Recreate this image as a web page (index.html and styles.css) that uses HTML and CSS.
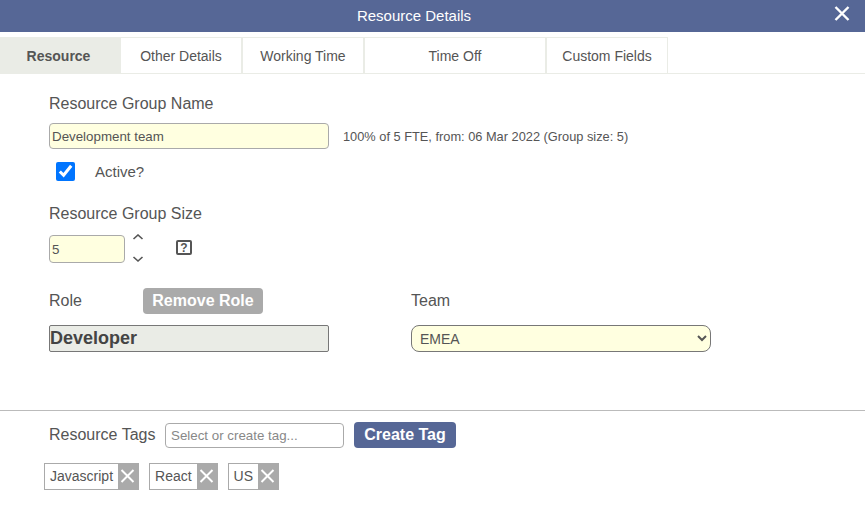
FILE: index.html
```html
<!DOCTYPE html>
<html lang="en">
<head>
<meta charset="utf-8">
<title>Resource Details</title>
<link rel="stylesheet" href="styles.css">
</head>
<body>
<header class="titlebar">
  <span class="title">Resource Details</span>
  <svg class="close" width="16" height="16" viewBox="0 0 16 16"><path d="M1.500 2 L14.500 15 M14.500 2 L1.500 15" stroke="#fff" stroke-width="2.400" fill="none"/></svg>
</header>
<nav class="tabs">
  <div class="tab tab-active tab-w1">Resource</div>
  <div class="tab tab-w2">Other Details</div>
  <div class="tab tab-w3">Working Time</div>
  <div class="tab tab-w4">Time Off</div>
  <div class="tab tab-w5">Custom Fields</div>
</nav>
<main class="form">
  <div class="label label-first">Resource Group Name</div>
  <div class="row name-row">
    <input class="field name-input" type="text" value="Development team">
    <span class="fte">100% of 5 FTE, from: 06 Mar 2022 (Group size: 5)</span>
  </div>
  <label class="active-row">
    <input class="check" type="checkbox" checked>
    <span class="active-text">Active?</span>
  </label>
  <div class="label label-size">Resource Group Size</div>
  <div class="row size-row">
    <input class="field size-input" type="text" value="5">
    <div class="stepper">
      <svg width="12" height="8" viewBox="0 0 12 8"><path d="M1.500 5 L6 1 L10.500 5" stroke="#555" stroke-width="1.600" fill="none"/></svg>
      <svg width="12" height="8" viewBox="0 0 12 8"><path d="M1.500 1 L6 5 L10.500 1" stroke="#555" stroke-width="1.600" fill="none"/></svg>
    </div>
    <span class="help">?</span>
  </div>
  <div class="role-grid">
    <div class="role-col">
      <div class="role-head">
        <span class="label role-label">Role</span>
        <button class="btn btn-grey" type="button">Remove Role</button>
      </div>
      <div class="role-value">Developer</div>
    </div>
    <div class="team-col">
      <div class="label team-label">Team</div>
      <select class="team-select"><option>EMEA</option></select>
    </div>
  </div>
</main>
<section class="tags-section">
  <div class="row tags-row">
    <span class="label tags-label">Resource Tags</span>
    <input class="tag-input" type="text" placeholder="Select or create tag...">
    <button class="btn btn-blue" type="button">Create Tag</button>
  </div>
  <div class="tag-list">
    <div class="tag"><span class="tag-text">Javascript</span><span class="tag-x"><svg width="20" height="25" viewBox="0 0 20 25"><path d="M3.500 6 L15.500 18 M15.500 6 L3.500 18" stroke="#fff" stroke-width="2" fill="none"/></svg></span></div>
    <div class="tag"><span class="tag-text">React</span><span class="tag-x"><svg width="20" height="25" viewBox="0 0 20 25"><path d="M3.500 6 L15.500 18 M15.500 6 L3.500 18" stroke="#fff" stroke-width="2" fill="none"/></svg></span></div>
    <div class="tag"><span class="tag-text">US</span><span class="tag-x"><svg width="20" height="25" viewBox="0 0 20 25"><path d="M3.500 6 L15.500 18 M15.500 6 L3.500 18" stroke="#fff" stroke-width="2" fill="none"/></svg></span></div>
  </div>
</section>
</body>
</html>
```
FILE: styles.css
```css
* { box-sizing: border-box; }
html, body { margin: 0; padding: 0; }
body {
  width: 865px;
  height: 511px;
  overflow: hidden;
  background: #fff;
  font-family: "Liberation Sans", Arial, sans-serif;
  color: #555;
}
.titlebar {
  height: 32px;
  background: #566796;
  color: #fff;
  display: flex;
  align-items: center;
  justify-content: center;
  position: relative;
  font-size: 15px;
  padding-right: 37px;
  padding-bottom: 2px;
}
.close { position: absolute; right: 15px; top: 5px; }
.tabs {
  margin-top: 5px;
  height: 37px;
  display: flex;
  border-bottom: 1px solid #eaece6;
}
.tab {
  height: 37px;
  display: flex;
  align-items: center;
  justify-content: center;
  font-size: 14px;
  color: #555;
  background: #fff;
  border: 1px solid #eaece6;
  border-left-width: 1px;
  border-bottom: 1px solid #eaece6;
}
.tab-active { background: #eaece6; font-weight: bold; padding-right: 4px; }
.tab-w1 { width: 121px; }
.tab-w2 { width: 121px; border-left-width: 0; }
.tab-w3 { width: 122px; }
.tab-w4 { width: 182px; }
.tab-w5 { width: 122px; }
.form { padding-left: 49px; height: 336px; }
.label { font-size: 16px; color: #555; line-height: 18px; }
.label-first { padding-top: 21px; height: 39px; }
.row { display: flex; align-items: center; }
.name-row { margin-top: 10px; }
.field {
  font-family: inherit;
  background: #ffffe0;
  border: 1px solid #aaa;
  border-radius: 4px;
  color: #555;
  padding: 0 2px;
  outline: none;
}
.name-input { width: 280px; height: 26px; font-size: 13.333px; }
.fte { margin-left: 14px; font-size: 12.800px; }
.active-row { display: flex; align-items: center; margin: 13px 0 0 7px; height: 19px; }
.check { width: 19px; height: 19px; margin: 0; accent-color: #0075ff; }
.active-text { margin-left: 20px; font-size: 15px; }
.label-size { margin-top: 24px; }
.size-row { margin-top: 11px; height: 30px; }
.size-input { width: 76px; height: 28px; font-size: 13.333px; }
.stepper {
  margin-left: 7px;
  width: 12px;
  height: 30px;
  display: flex;
  flex-direction: column;
  justify-content: space-between;
}
.stepper svg { display: block; }
.help {
  margin: 0 0 3px 32px;
  width: 16px;
  height: 15px;
  border: 2px solid #555;
  border-radius: 2px;
  font-size: 12px;
  font-weight: bold;
  line-height: 12px;
  text-align: center;
}
.role-grid { display: flex; margin-top: 24px; }
.role-col { width: 280px; }
.role-head { display: flex; align-items: center; height: 26px; }
.role-label { width: 94px; }
.btn {
  font-family: inherit;
  font-weight: bold;
  color: #fff;
  border: 0;
  border-radius: 4px;
  padding: 0;
  font-size: 16px;
}
.btn-grey { width: 120px; height: 26px; background: #aaa; }
.role-value {
  margin-top: 11px;
  width: 280px;
  height: 27px;
  background: #eaece6;
  border: 1px solid #777;
  border-radius: 2px;
  font-size: 18px;
  font-weight: bold;
  color: #444;
  line-height: 24px;
  padding-left: 0;
}
.team-col { margin-left: 82px; }
.team-label { height: 26px; line-height: 26px; }
.team-select {
  display: block;
  margin-top: 11px;
  width: 300px;
  height: 27px;
  background-color: #ffffe0;
  border: 1px solid #777;
  border-radius: 8px;
  font-family: inherit;
  font-size: 14px;
  color: #555;
  padding-left: 4px;
}
.tags-section { border-top: 1px solid #bbb; height: 101px; }
.tags-row { margin-top: 11px; padding-left: 49px; height: 26px; }
.tags-label { width: 116px; }
.tag-input {
  width: 179px;
  height: 25px;
  border: 1px solid #aaa;
  border-radius: 4px;
  font-family: inherit;
  font-size: 13.333px;
  padding: 0 5px;
  outline: none;
}
.tag-input::placeholder { color: #888; }
.btn-blue { margin-left: 10px; width: 102px; height: 26px; background: #566796; }
.tag-list { display: flex; gap: 10px; margin: 15px 0 0 44px; }
.tag {
  display: flex;
  height: 27px;
  border: 1px solid #aaa;
  font-size: 14px;
}
.tag-text { padding: 0 5px; line-height: 25px; }
.tag-x { width: 20px; background: #aaa; overflow: hidden; }
.tag-x svg { display: block; }
```
